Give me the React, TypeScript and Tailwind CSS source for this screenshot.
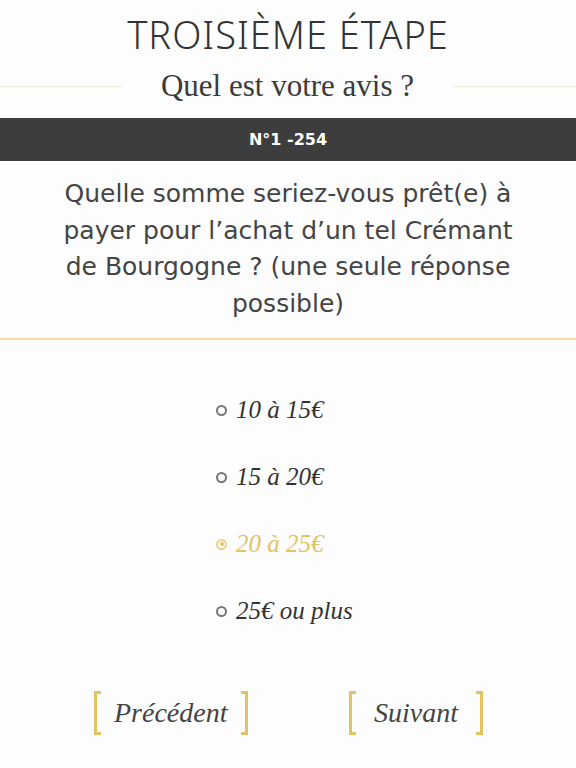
import React from 'react';

const options = ['10 à 15€', '15 à 20€', '20 à 25€', '25€ ou plus'];

function Bracket({ side }: { side: 'l' | 'r' }) {
  return (
    <span
      className={
        side === 'l'
          ? 'block w-[7px] h-[44px] border-[3px] border-r-0 border-[#e3c262]'
          : 'block w-[7px] h-[44px] border-[3px] border-l-0 border-[#e3c262]'
      }
    />
  );
}

function NavButton({ label, wide }: { label: string; wide?: boolean }) {
  return (
    <button className={'flex items-center text-[#444] ' + (wide ? 'gap-[18px]' : 'gap-[13px]')}>
      <Bracket side="l" />
      <span className="text-[28px] italic leading-none font-['Liberation_Serif',serif]">{label}</span>
      <Bracket side="r" />
    </button>
  );
}

export default function App() {
  const selected = 2;
  return (
    <div className="min-h-[768px] bg-[#fdfdfd] flex flex-col font-['DejaVu_Sans',sans-serif]">
      <h1 className="text-center text-[38px] font-light tracking-[1px] text-[#333] pt-[12px] leading-[44px] font-['Noto_Sans',sans-serif]">
        TROISIÈME ÉTAPE
      </h1>
      <div className="flex items-center mt-[10px]">
        <div className="w-[122px] h-px bg-[#efe8d2]" />
        <h2 className="flex-1 text-center text-[31px] leading-[40px] text-[#3a3a3a] font-['Liberation_Serif',serif]">
          Quel est votre avis ?
        </h2>
        <div className="w-[123px] h-px bg-[#efe8d2]" />
      </div>
      <div className="mt-[12px] h-[43px] bg-[#3d3d3d] flex items-center justify-center text-white font-bold text-[16px]">
        N°1 -254
      </div>
      <p className="mx-auto w-[480px] text-center text-[25px] leading-[36.5px] text-[#444] pt-[15px] pb-[16px]">
        Quelle somme seriez-vous prêt(e) à payer pour l’achat d’un tel Crémant de Bourgogne ? (une seule réponse possible)
      </p>
      <div className="h-[2px] bg-[#f3dca2]" />
      <div className="flex flex-col items-start pl-[216px] pt-[54px] gap-[35px]">
        {options.map((o, i) => (
          <label key={o} className="flex items-center gap-[9px] h-[32px]">
            <span
              className={
                i === selected
                  ? 'w-[11px] h-[11px] rounded-full border-2 border-[#ead08a] flex items-center justify-center'
                  : 'w-[11px] h-[11px] rounded-full border-2 border-[#777]'
              }
            >
              {i === selected && <span className="w-[4px] h-[4px] rounded-full bg-[#e3c262]" />}
            </span>
            <span
              className={
                'text-[25px] italic font-["Liberation_Serif",serif] ' +
                (i === selected ? 'text-[#e3c262]' : 'text-[#333]')
              }
            >
              {o}
            </span>
          </label>
        ))}
      </div>
      <div className="flex justify-between pl-[94px] pr-[93px] mt-[64px]">
        <NavButton label="Précédent" />
        <NavButton label="Suivant" wide />
      </div>
    </div>
  );
}
